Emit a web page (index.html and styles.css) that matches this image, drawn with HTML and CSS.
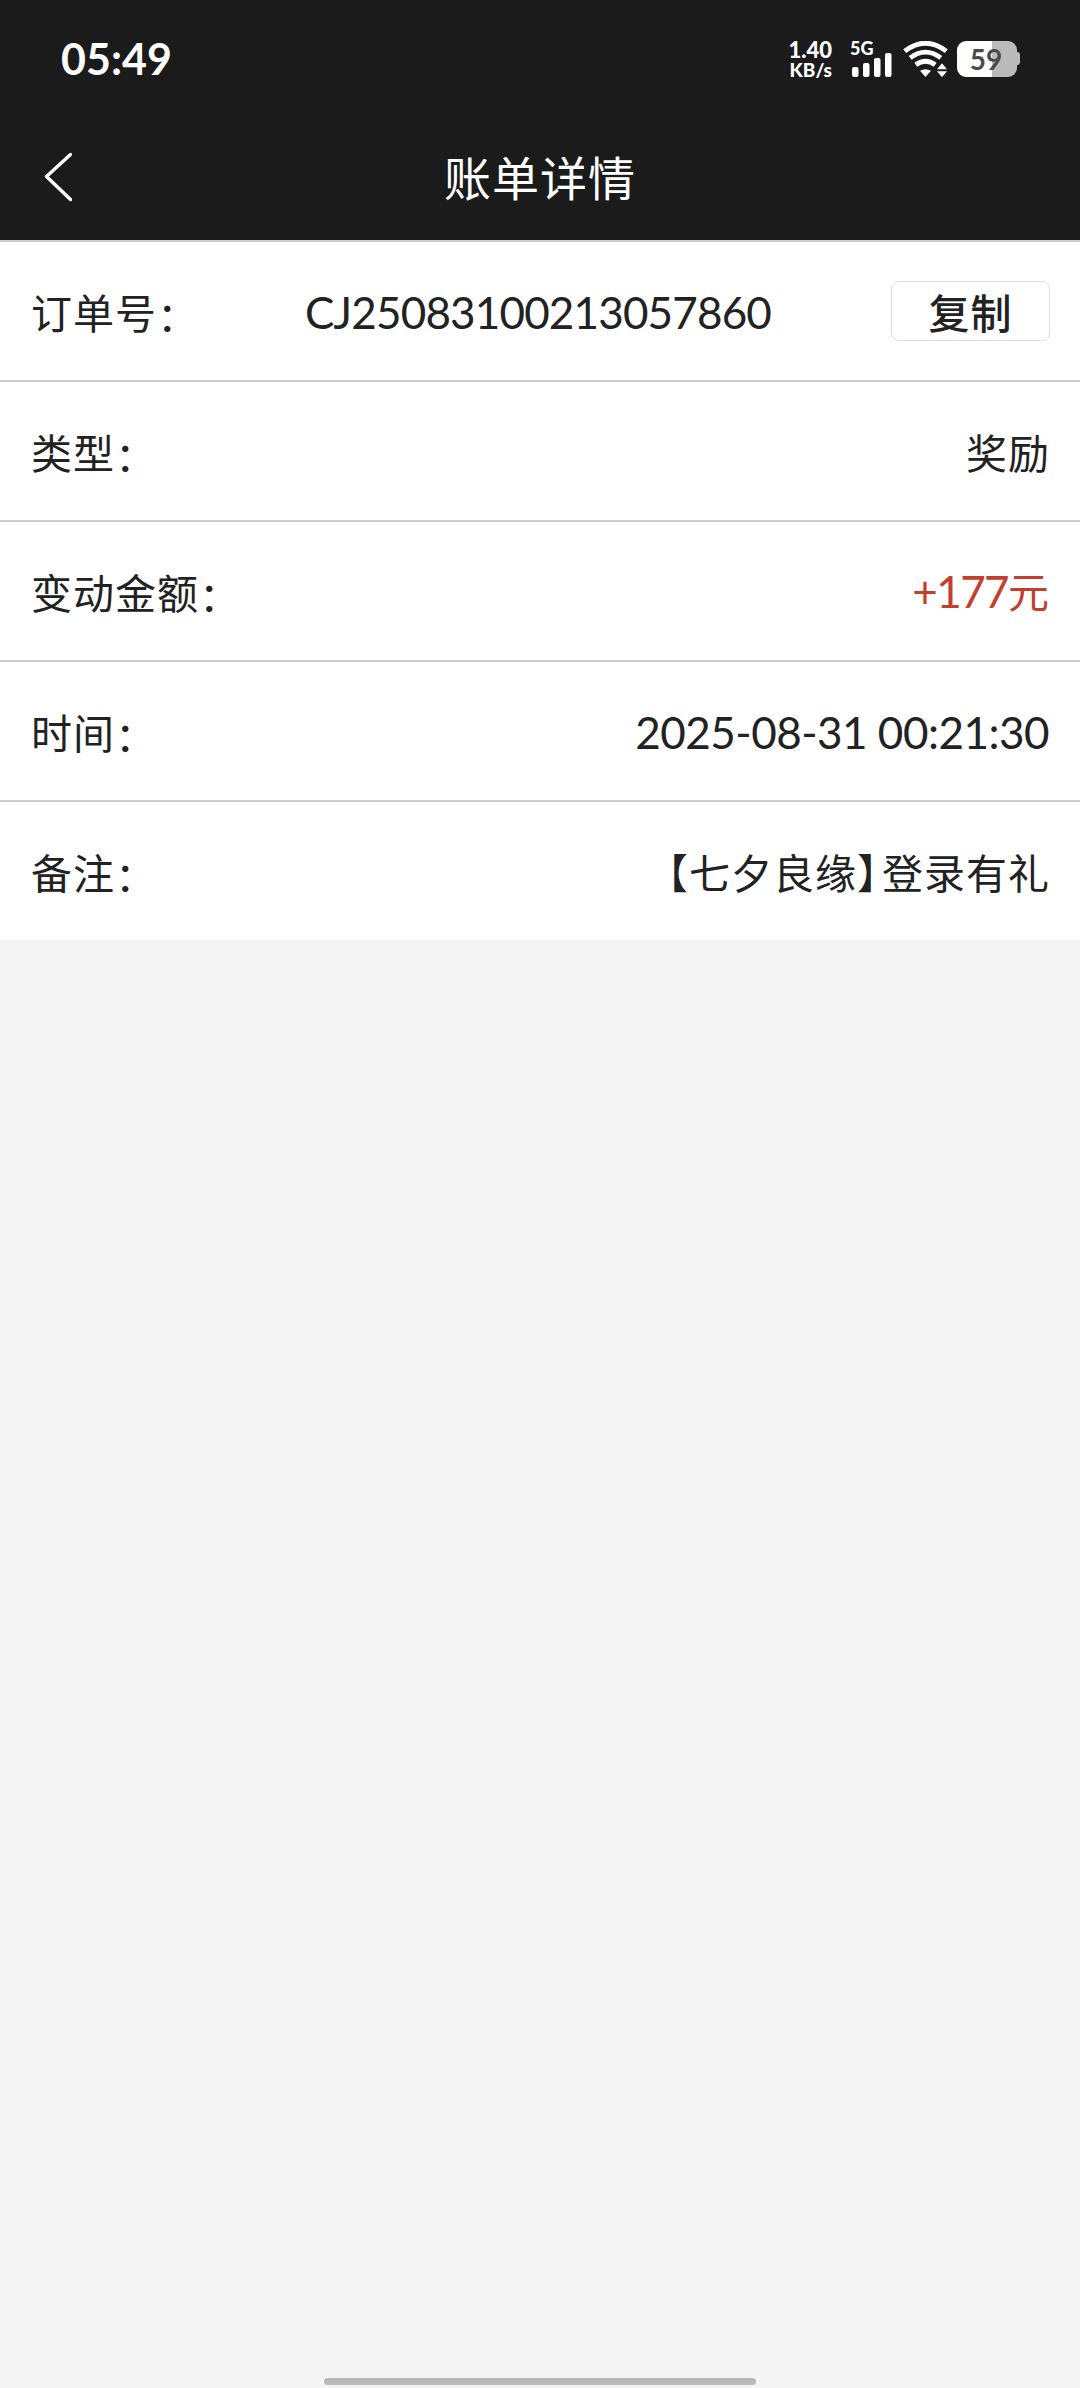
FILE: index.html
```html
<!DOCTYPE html>
<html lang="zh-CN">
<head>
<meta charset="utf-8">
<title>账单详情</title>
<link rel="stylesheet" href="styles.css">
</head>
<body>
<header class="top">
  <div class="status">
    <time class="clock">05:49</time>
    <div class="indicators">
      <div class="speed"><span class="speed-value">1.40</span><span class="speed-unit">KB/s</span></div>
      <div class="mobile">
        <span class="network">5G</span>
        <svg class="signal" viewBox="0 0 40 24" width="40" height="24" fill="#fff">
          <rect x="0" y="14" width="6.5" height="10" rx="2"/>
          <rect x="11" y="10" width="6.5" height="14" rx="2"/>
          <rect x="22" y="5" width="6.5" height="19" rx="2"/>
          <rect x="33" y="0" width="6.5" height="24" rx="2"/>
        </svg>
      </div>
      <svg class="wifi" viewBox="0 0 46 36" width="46" height="36" fill="none" stroke="#fff" stroke-width="4.8">
        <path d="M1.7 10.1Q22.5-5.7 43.3 10.1"/>
        <path d="M7.2 16.8Q22.5 5.4 37.8 16.8"/>
        <path d="M12.8 23.8Q22.5 16.7 32.2 23.8"/>
        <path d="M17 29.7Q22.5 26.7 28 29.7L22.5 36Z" fill="#fff" stroke="none"/>
        <path d="M34 28.2L39 22.2L44 28.2ZM34 30.2L39 36.2L44 30.2Z" fill="#fff" stroke="none"/>
      </svg>
      <div class="battery"><span class="battery-level">59</span></div>
    </div>
  </div>
  <nav class="nav">
    <svg class="back" viewBox="0 0 28 50" width="28" height="50" fill="none" stroke="#fff" stroke-width="3.4" stroke-linecap="round" stroke-linejoin="round"><path d="M26.5 2.5L2.5 24.5L26.5 47.5"/></svg>
    <h1 class="title">账单详情</h1>
  </nav>
</header>
<main class="details">
  <div class="row">
    <span class="label">订单号<span class="colon">：</span></span>
    <span class="order">CJ25083100213057860</span>
    <button class="copy">复制</button>
  </div>
  <div class="row"><span class="label">类型<span class="colon">：</span></span><span class="value">奖励</span></div>
  <div class="row"><span class="label">变动金额<span class="colon">：</span></span><span class="value amount"><span class="num">+177</span>元</span></div>
  <div class="row"><span class="label">时间<span class="colon">：</span></span><span class="value date">2025-08-31 00:21:30</span></div>
  <div class="row"><span class="label">备注<span class="colon">：</span></span><span class="value"><span class="open">【</span>七夕良缘<span class="close">】</span>登录有礼</span></div>
</main>
<div class="home"></div>
</body>
</html>
```
FILE: styles.css
```css
* { box-sizing: border-box; }
body {
  margin: 0;
  height: 2388px;
  display: flex;
  flex-direction: column;
  background: #f4f4f4;
  color: #222;
  font-family: "Noto Sans CJK SC", sans-serif;
  font-size: 41px;
}
.top { height: 240px; background: #1b1b1b; color: #fff; }
.status {
  height: 118px;
  padding: 0 60px 0 61px;
  display: flex;
  align-items: center;
  justify-content: space-between;
  font-family: Lato, sans-serif;
  font-weight: 700;
}
.clock { font-size: 43px; line-height: 50px; }
.indicators { display: flex; align-items: center; }
.speed { width: 46px; margin-right: 18px; text-align: right; }
.speed-value, .speed-unit { display: block; white-space: nowrap; }
.speed-value { font-size: 22px; line-height: 20px; font-weight: 900; }
.speed-unit { font-size: 19px; line-height: 19px; font-weight: 900; }
.mobile { width: 42px; height: 36px; margin-right: 11px; }
.network { display: block; height: 12px; font-size: 18px; line-height: 15px; font-weight: 900; }
.signal { display: block; margin-left: 2px; }
.wifi { margin-right: 8px; }
.battery {
  position: relative;
  width: 60px;
  height: 36px;
  margin-right: 3px;
  border-radius: 9px;
  background: linear-gradient(90deg, #fff 35px, #bbb 35px);
  color: #4a4a4a;
  text-align: center;
}
.battery::after {
  content: "";
  position: absolute;
  left: 60px;
  top: 11px;
  width: 3px;
  height: 13px;
  border-radius: 0 3px 3px 0;
  background: #bbb;
}
.battery-level { display: block; padding-right: 2px; font-size: 28px; line-height: 36px; }
.nav {
  height: 122px;
  padding: 0 44px 6px;
  display: grid;
  grid-template-columns: 28px 1fr 28px;
  align-items: center;
}
.back { margin-top: 2px; }
.title { margin: 0; text-align: center; font-size: 47px; letter-spacing: 1px; line-height: 60px; font-weight: 400; }
.details { background: #fff; }
.row {
  height: 140px;
  padding: 0 30px 0 31px;
  border-top: 2px solid #ccc;
  display: flex;
  align-items: center;
  justify-content: space-between;
  line-height: 60px;
}
.label, .value { white-space: nowrap; letter-spacing: 1px; }
.label, .value:not(.date) { margin-top: -1px; }
.colon { line-height: 40px; vertical-align: -3px; }
.order, .date, .num { font-family: Lato, sans-serif; font-size: 44px; }
.order, .date { margin-top: 1px; }
.label + .order { margin: 1px auto 0 106px; letter-spacing: -0.83px; }
.date { letter-spacing: -0.5px; margin-right: 1px; }
.num { letter-spacing: -1.6px; }
.copy {
  width: 159px;
  height: 60px;
  padding: 0;
  border: 1px solid #ddd;
  border-radius: 8px;
  background: #fff;
  color: #222;
  font: 500 41px/56px "Noto Sans CJK SC", sans-serif;
  letter-spacing: 1px;
}
.amount { color: #c13f2c; }
.close { letter-spacing: -16px; }
.home { width: 432px; height: 7px; margin: auto auto 3px; border-radius: 4px; background: #b9b9b9; }
```
